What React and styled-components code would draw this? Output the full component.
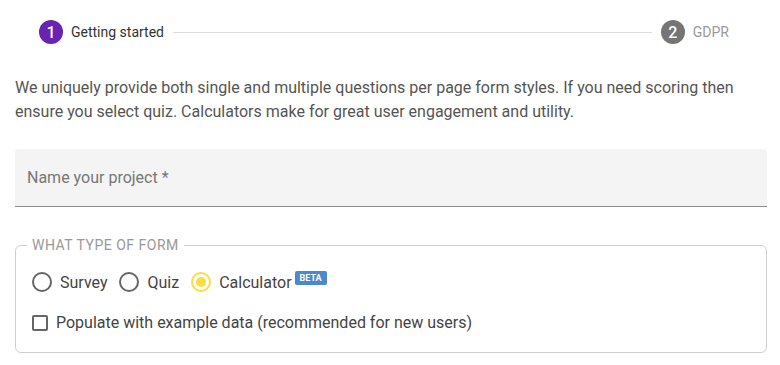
import React, { useState } from 'react';
import styled, { createGlobalStyle } from 'styled-components';

const GlobalStyle = createGlobalStyle`
  body {
    margin: 0;
    background: #fff;
    font-family: Roboto, "Liberation Sans", sans-serif;
  }
`;

const Page = styled.div`
  width: 780px;
  padding: 0 13px 0 15px;
  box-sizing: border-box;
`;

const Stepper = styled.div`
  display: flex;
  align-items: center;
  padding: 20px 38px 0 24px;
  height: 44px;
  box-sizing: border-box;
`;

const Step = styled.div`
  display: flex;
  align-items: center;
  gap: 8px;
`;

const StepIcon = styled.span`
  width: 24px;
  height: 24px;
  border-radius: 50%;
  background: ${({ $active }) => ($active ? '#6a22b0' : '#757575')};
  color: #fff;
  font-size: 16px;
  font-weight: 500;
  display: flex;
  align-items: center;
  justify-content: center;
`;

const StepLabel = styled.span`
  font-size: 14px;
  color: ${({ $active }) => ($active ? '#333' : '#999')};
`;

const Connector = styled.div`
  flex: 1;
  height: 1px;
  background: #dcdcdc;
  margin: 0 9px;
`;

const Intro = styled.p`
  margin: 32px 0 0;
  font-size: 16px;
  line-height: 24px;
  color: #555;
`;

const Field = styled.div`
  margin-top: 25px;
  height: 58px;
  background: #f4f4f4;
  border-radius: 4px 4px 0 0;
  border-bottom: 1px solid #8a8a8a;
  display: flex;
  align-items: center;
  padding: 0 10px;
  box-sizing: border-box;
`;

const FieldInput = styled.input`
  border: none;
  background: transparent;
  outline: none;
  width: 100%;
  font: inherit;
  font-size: 16px;
  color: #333;
  &::placeholder {
    color: #777;
  }
`;

const Group = styled.fieldset`
  margin: 30px 0 0;
  padding: 17px 16px 20px;
  border: 1px solid #cfcfcf;
  border-radius: 6px;
`;

const Legend = styled.legend`
  padding: 0 5px;
  margin-left: -5px;
  font-size: 14px;
  letter-spacing: 0.5px;
  color: #999;
  text-transform: uppercase;
`;

const Options = styled.div`
  display: flex;
  align-items: center;
  gap: 12px;
  height: 24px;
`;

const Option = styled.label`
  display: flex;
  align-items: center;
  gap: 8px;
  font-size: 16px;
  color: #444;
  cursor: pointer;
`;

const RadioRing = styled.span`
  width: 20px;
  height: 20px;
  box-sizing: border-box;
  border-radius: 50%;
  border: 2px solid ${({ $checked }) => ($checked ? '#fbdc41' : '#666')};
  display: flex;
  align-items: center;
  justify-content: center;
  &::after {
    content: '';
    width: 10px;
    height: 10px;
    border-radius: 50%;
    background: #fbdc41;
    display: ${({ $checked }) => ($checked ? 'block' : 'none')};
  }
`;

const Beta = styled.sup`
  margin-left: -5px;
  align-self: flex-start;
  margin-top: -1px;
  background: #4b88cc;
  color: #fff;
  font-size: 9px;
  font-weight: 700;
  line-height: 14px;
  padding: 0 5px;
  border-radius: 2px;
`;

const CheckRow = styled.label`
  display: flex;
  align-items: center;
  gap: 8px;
  margin-top: 19px;
  font-size: 16px;
  color: #444;
  cursor: pointer;
`;

const CheckBox = styled.span`
  width: 16px;
  height: 16px;
  box-sizing: border-box;
  border: 2px solid #666;
  border-radius: 2px;
`;

const types = ['Survey', 'Quiz', 'Calculator'];

export default function App() {
  const [type, setType] = useState('Calculator');

  return (
    <>
      <GlobalStyle />
      <Page>
        <Stepper>
          <Step>
            <StepIcon $active>1</StepIcon>
            <StepLabel $active>Getting started</StepLabel>
          </Step>
          <Connector />
          <Step>
            <StepIcon>2</StepIcon>
            <StepLabel>GDPR</StepLabel>
          </Step>
        </Stepper>

        <Intro>
          We uniquely provide both single and multiple questions per page form styles. If you need scoring then
          ensure you select quiz. Calculators make for great user engagement and utility.
        </Intro>

        <Field>
          <FieldInput placeholder="Name your project *" />
        </Field>

        <Group>
          <Legend>What type of form</Legend>
          <Options>
            {types.map((t) => (
              <Option key={t} onClick={() => setType(t)}>
                <RadioRing $checked={type === t} />
                {t}
                {t === 'Calculator' && <Beta>BETA</Beta>}
              </Option>
            ))}
          </Options>
          <CheckRow>
            <CheckBox />
            Populate with example data (recommended for new users)
          </CheckRow>
        </Group>
      </Page>
    </>
  );
}
